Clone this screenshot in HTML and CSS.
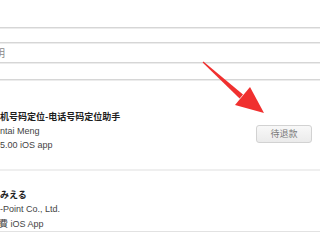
FILE: index.html
```html
<!DOCTYPE html>
<html>
<head>
<meta charset="utf-8">
<link rel="stylesheet" href="styles.css">
</head>
<body>
<div class="page">
  <div class="field field-a"></div>
  <div class="field field-b"><span class="cut">明</span></div>
  <div class="field field-c"></div>
  <div class="item item-1">
    <div class="info">
      <div class="title">机号码定位-电话号码定位助手</div>
      <div class="sub">ntai Meng</div>
      <div class="sub">5.00 iOS app</div>
    </div>
    <button class="btn">待退款</button>
  </div>
  <div class="item item-2">
    <div class="info">
      <div class="title">みえる</div>
      <div class="sub">-Point Co., Ltd.</div>
      <div class="sub shift">費 iOS App</div>
    </div>
  </div>
  <svg class="arrow" width="320" height="240" viewBox="0 0 320 240">
    <polygon points="202.6,62.5 203.4,61.5 243,94.5 239.6,98.6" fill="#f0302f"/>
    <polygon points="264,113 235,105 250,87" fill="#f0302f"/>
  </svg>
</div>
</body>
</html>
```
FILE: styles.css
```css
html, body {
  margin: 0;
  padding: 0;
  background: #fff;
}
.page {
  position: relative;
  width: 320px;
  height: 240px;
  overflow: hidden;
  padding-top: 27px;
  box-sizing: border-box;
  font-family: "Liberation Sans", "Noto Sans CJK SC", sans-serif;
}
.field {
  border-top: 1px solid #d6d6d6;
  box-shadow: inset 0 1px 0 #ececec;
}
.field-a { height: 14px; }
.field-b {
  height: 19px;
  display: flex;
  align-items: center;
}
.field-c { height: 16px; }
.cut {
  font-family: "Noto Sans CJK SC", sans-serif;
  font-size: 10px;
  color: #8a8a8a;
  margin-left: -5px;
  line-height: 1;
}
.item {
  display: flex;
  justify-content: space-between;
  align-items: flex-start;
}
.item-1 {
  border-top: 1px solid #d6d6d6;
  box-shadow: inset 0 1px 0 #ececec;
  padding: 30px 8px 18px 0;
  height: 90px;
  box-sizing: border-box;
}
.item-2 {
  border-top: 2px solid #efefef;
  border-bottom: 1px solid #e2e2e2;
  padding-top: 16px;
  height: 63px;
  box-sizing: border-box;
}
.title {
  font-family: "Noto Sans CJK SC", sans-serif;
  font-weight: bold;
  font-size: 9px;
  color: #1e1e1e;
  line-height: 14px;
  height: 14px;
}
.item-2 .title,
.item-2 .sub { line-height: 15px; height: 15px; }
.sub {
  font-size: 9px;
  color: #444;
  line-height: 14px;
  height: 14px;
  white-space: nowrap;
}
.shift { margin-left: -1px; }
.btn {
  margin-top: 15px;
  width: 56px;
  height: 18px;
  border: 1px solid #d2d2d2;
  border-radius: 3px;
  background: linear-gradient(#f8f8f8, #ebebeb);
  color: #7a7a7a;
  font-family: "Noto Sans CJK SC", sans-serif;
  font-size: 9px;
  padding: 0;
  line-height: 16px;
}
.arrow {
  position: absolute;
  left: 0;
  top: 0;
  pointer-events: none;
}
```
